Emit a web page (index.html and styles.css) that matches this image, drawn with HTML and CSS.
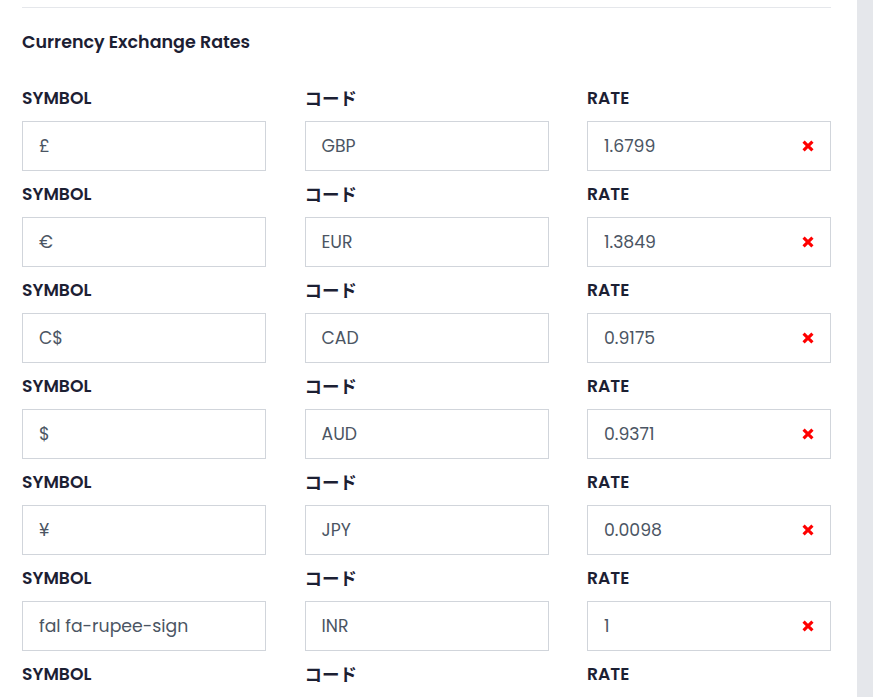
FILE: index.html
```html
<!DOCTYPE html>
<html lang="en">
<head>
<meta charset="utf-8">
<title>Currency Exchange Rates</title>
<link rel="stylesheet" href="styles.css">
</head>
<body>
<div class="page">
  <main class="panel">
    <div class="divider"></div>
    <h2 class="title">Currency Exchange Rates</h2>
    <div class="rates">
      <div class="row">
        <div class="field"><label class="label">SYMBOL</label><div class="input">£</div></div>
        <div class="field"><label class="label jp">コード</label><div class="input">GBP</div></div>
        <div class="field"><label class="label">RATE</label><div class="input with-remove"><span>1.6799</span><svg class="remove" viewBox="0 0 10 10"><path d="M1.3 1.3 8.7 8.7M8.7 1.3 1.3 8.7"/></svg></div></div>
      </div>
      <div class="row">
        <div class="field"><label class="label">SYMBOL</label><div class="input">€</div></div>
        <div class="field"><label class="label jp">コード</label><div class="input">EUR</div></div>
        <div class="field"><label class="label">RATE</label><div class="input with-remove"><span>1.3849</span><svg class="remove" viewBox="0 0 10 10"><path d="M1.3 1.3 8.7 8.7M8.7 1.3 1.3 8.7"/></svg></div></div>
      </div>
      <div class="row">
        <div class="field"><label class="label">SYMBOL</label><div class="input">C$</div></div>
        <div class="field"><label class="label jp">コード</label><div class="input">CAD</div></div>
        <div class="field"><label class="label">RATE</label><div class="input with-remove"><span>0.9175</span><svg class="remove" viewBox="0 0 10 10"><path d="M1.3 1.3 8.7 8.7M8.7 1.3 1.3 8.7"/></svg></div></div>
      </div>
      <div class="row">
        <div class="field"><label class="label">SYMBOL</label><div class="input">$</div></div>
        <div class="field"><label class="label jp">コード</label><div class="input">AUD</div></div>
        <div class="field"><label class="label">RATE</label><div class="input with-remove"><span>0.9371</span><svg class="remove" viewBox="0 0 10 10"><path d="M1.3 1.3 8.7 8.7M8.7 1.3 1.3 8.7"/></svg></div></div>
      </div>
      <div class="row">
        <div class="field"><label class="label">SYMBOL</label><div class="input">¥</div></div>
        <div class="field"><label class="label jp">コード</label><div class="input">JPY</div></div>
        <div class="field"><label class="label">RATE</label><div class="input with-remove"><span>0.0098</span><svg class="remove" viewBox="0 0 10 10"><path d="M1.3 1.3 8.7 8.7M8.7 1.3 1.3 8.7"/></svg></div></div>
      </div>
      <div class="row">
        <div class="field"><label class="label">SYMBOL</label><div class="input">fal fa-rupee-sign</div></div>
        <div class="field"><label class="label jp">コード</label><div class="input">INR</div></div>
        <div class="field"><label class="label">RATE</label><div class="input with-remove"><span>1</span><svg class="remove" viewBox="0 0 10 10"><path d="M1.3 1.3 8.7 8.7M8.7 1.3 1.3 8.7"/></svg></div></div>
      </div>
      <div class="row">
        <div class="field"><label class="label">SYMBOL</label><div class="input"></div></div>
        <div class="field"><label class="label jp">コード</label><div class="input"></div></div>
        <div class="field"><label class="label">RATE</label><div class="input"></div></div>
      </div>
    </div>
  </main>
  <aside class="side"></aside>
</div>
</body>
</html>
```
FILE: styles.css
```css
html, body {
  margin: 0;
  padding: 0;
  height: 100%;
  overflow: hidden;
}
body {
  font-family: "Poppins", Inter, "Noto Sans CJK JP", sans-serif;
  background: #ffffff;
}
.page {
  display: flex;
  height: 697px;
}
.panel {
  width: 857px;
  box-sizing: border-box;
  padding: 7px 26px 0 22px;
  background: #ffffff;
  flex: none;
}
.side {
  flex: 1;
  background: #e5e7eb;
}
.divider {
  height: 1px;
  background: #e5e7eb;
}
.title {
  margin: 22px 0 32px;
  font-size: 17.5px;
  line-height: 24px;
  font-weight: 600;
  color: #1c2033;
}
.rates {
  display: flex;
  flex-direction: column;
  gap: 11px;
}
.row {
  display: grid;
  grid-template-columns: repeat(3, 1fr);
  column-gap: 38.5px;
}
.field {
  display: flex;
  flex-direction: column;
  gap: 11px;
}
.label {
  font-size: 17.2px;
  line-height: 24px;
  font-weight: 600;
  color: #1c2033;
}
.label.jp {
  font-family: "Noto Sans CJK JP", sans-serif;
  font-weight: 700;
  font-size: 17.5px;
}
.input {
  box-sizing: border-box;
  height: 50px;
  border: 1px solid #d1d5db;
  background: #ffffff;
  padding: 0 16px;
  display: flex;
  align-items: center;
  font-size: 17.3px;
  color: #4b5563;
}
.with-remove {
  justify-content: space-between;
}
.remove {
  width: 12px;
  height: 12px;
  margin-right: 0;
  stroke: #ff0000;
  stroke-width: 2.6;
  fill: none;
}
```
